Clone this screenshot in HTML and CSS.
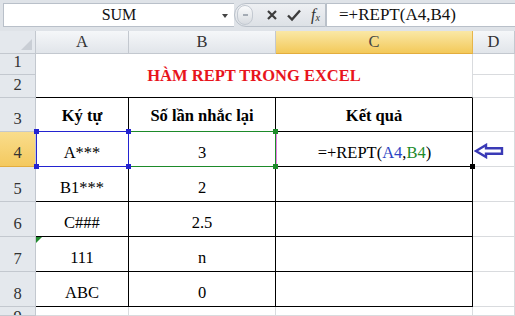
FILE: index.html
```html
<!DOCTYPE html>
<html>
<head>
<title>HÀM REPT TRONG EXCEL</title>
<link rel="stylesheet" href="styles.css">
</head>
<body>
	<div class="formula-bar">
		<div class="name-box">
			<span class="name">SUM</span>
			<span class="drop"></span>
		</div>
		<div class="fx-buttons">
			<span class="grip"><span></span></span>
			<svg class="btn" width="14" height="14" viewBox="0 0 14 14"><path d="M3 3 L11 11 M11 3 L3 11" stroke="#3c3c3c" stroke-width="2.2" fill="none"/></svg>
			<svg class="btn" width="16" height="14" viewBox="0 0 16 14"><path d="M2 7.5 L6 11.5 L14 2.5" stroke="#3c3c3c" stroke-width="2.4" fill="none"/></svg>
			<span class="fx">f<sub>x</sub></span>
		</div>
		<div class="formula">=+REPT(A4,B4)</div>
	</div>

	<div class="sheet">
		<!-- column headers -->
		<div class="corner"></div>
		<div class="ch">A</div>
		<div class="ch">B</div>
		<div class="ch sel">C</div>
		<div class="ch">D</div>

		<!-- rows 1-2 : title -->
		<div class="rh">1</div>
		<div class="cell title">HÀM REPT TRONG EXCEL</div>
		<div class="cell"></div>
		<div class="rh">2</div>
		<div class="cell"></div>

		<!-- row 3 : headers -->
		<div class="rh">3</div>
		<div class="cell t head">Ký tự</div>
		<div class="cell t head">Số lần nhắc lại</div>
		<div class="cell t head">Kết quả</div>
		<div class="cell"></div>

		<!-- row 4 -->
		<div class="rh sel">4</div>
		<div class="cell t">A***<span class="ref blue"><i class="h tl"></i><i class="h tr"></i><i class="h bl"></i><i class="h br"></i></span></div>
		<div class="cell t">3<span class="ref green"><i class="h tr"></i><i class="h br"></i></span></div>
		<div class="cell t active">=+REPT(<span class="c-blue">A4</span>,<span class="c-green">B4</span>)<i class="fill"></i></div>
		<div class="cell arrow-cell">
			<svg width="30" height="16" viewBox="0 0 30 16"><path d="M2 8 L12 2 L12 5.2 L28 5.2 L28 10.8 L12 10.8 L12 14 Z" fill="#ffffff" stroke="#3a3ab6" stroke-width="2.4" stroke-linejoin="miter"/></svg>
		</div>

		<div class="rh">5</div>
		<div class="cell t">B1***</div>
		<div class="cell t">2</div>
		<div class="cell t"></div>
		<div class="cell"></div>

		<div class="rh">6</div>
		<div class="cell t">C###</div>
		<div class="cell t">2.5</div>
		<div class="cell t"></div>
		<div class="cell"></div>

		<div class="rh">7</div>
		<div class="cell t err">111</div>
		<div class="cell t">n</div>
		<div class="cell t"></div>
		<div class="cell"></div>

		<div class="rh">8</div>
		<div class="cell t">ABC</div>
		<div class="cell t">0</div>
		<div class="cell t"></div>
		<div class="cell"></div>

		<div class="rh last">9</div>
		<div class="cell"></div>
		<div class="cell"></div>
		<div class="cell"></div>
		<div class="cell"></div>
	</div>
</body>
</html>
```

FILE: styles.css
```css
html, body {
  margin: 0;
  padding: 0;
  background: #ffffff;
  font-family: "Liberation Serif", "Times New Roman", serif;
}

body {
  width: 515px;
  height: 316px;
  overflow: hidden;
}

/* formula bar */
.formula-bar {
  display: flex;
  height: 31px;
  box-sizing: border-box;
  padding-top: 3px;
  background: #dfe3e8;
}

.name-box {
  position: relative;
  display: flex;
  align-items: center;
  justify-content: center;
  margin-left: 3px;
  width: 231px;
  height: 24px;
  box-sizing: border-box;
  background: #fff;
  border: 1px solid #b9c0c9;
  border-right: none;
  font-size: 16px;
  color: #111;
}

.drop {
  position: absolute;
  right: 6px;
  top: 10px;
  border-left: 3.5px solid transparent;
  border-right: 3.5px solid transparent;
  border-top: 4px solid #444;
}

.fx-buttons {
  display: flex;
  align-items: center;
  width: 92px;
  height: 24px;
  box-sizing: border-box;
  border: 1px solid #b9c0c9;
  border-radius: 12px 0 0 12px;
  background: linear-gradient(#eef0f3, #dde1e6);
}

.grip {
  display: flex;
  align-items: center;
  justify-content: center;
  width: 14px;
  height: 18px;
  margin-left: 2px;
  border-radius: 8px;
  background: linear-gradient(#fafbfc, #d7dbe0);
  border: 1px solid #c3c9d1;
}

.grip span {
  width: 5px;
  height: 2px;
  background: #a4abb4;
}

.btn {
  margin-left: 12px;
}

.btn + .btn {
  margin-left: 7px;
}

.fx {
  margin-left: 9px;
  font-style: italic;
  font-size: 16px;
  color: #333;
}

.fx sub {
  font-size: 10px;
  vertical-align: -1px;
}

.formula {
  flex: 1;
  height: 24px;
  box-sizing: border-box;
  padding-left: 12px;
  background: #fff;
  border: 1px solid #b9c0c9;
  border-right: none;
  font-size: 17px;
  line-height: 22px;
  color: #111;
}

/* sheet */
.sheet {
  display: grid;
  grid-template-columns: 36px 93px 147px 197px 42px;
  grid-template-rows: 23px 21px 23px 34px 35px 35px 35px 35px 35px 9px;
  font-size: 16.5px;
  color: #000;
}

.sheet > div {
  box-sizing: border-box;
  border-right: 1px solid #d9dbde;
  border-bottom: 1px solid #d9dbde;
}

.corner {
  position: relative;
  background: #e4e8ed;
  border-color: #c3c8cf !important;
}

.corner::after {
  content: "";
  position: absolute;
  right: 3px;
  bottom: 3px;
  border-left: 11px solid transparent;
  border-bottom: 11px solid #c9ced5;
}

.ch {
  display: flex;
  align-items: center;
  justify-content: center;
  background: linear-gradient(#f5f7f9, #e1e5ea);
  border-color: #c3c8cf !important;
  color: #333;
}

.ch.sel {
  background: linear-gradient(#fae8a6, #f3c95a);
  border-right-color: #e6b54a !important;
  border-bottom-color: #e3ad3e !important;
  color: #444;
}

.rh {
  display: flex;
  align-items: flex-end;
  justify-content: center;
  padding-bottom: 2px;
  background: #e4e8ed;
  border-color: #c3c8cf !important;
  color: #333;
}

.rh.sel {
  background: linear-gradient(#f9dd8c, #f4c95f);
  border-bottom-color: #e3ad3e !important;
  padding-bottom: 3px;
}

.rh.last {
  align-items: flex-start;
  padding: 1px 0 0;
  line-height: 18px;
  overflow: hidden;
}

.cell {
  position: relative;
  display: flex;
  align-items: flex-end;
  justify-content: center;
  padding-bottom: 3px;
}

.title {
  grid-column: 2 / 5;
  grid-row: span 2;
  align-items: center;
  padding-bottom: 0;
  padding-top: 1px;
  font-weight: bold;
  color: #e8141c;
  border-bottom-color: #000 !important;
}

.t {
  border-right-color: #000 !important;
  border-bottom-color: #000 !important;
}

.head {
  font-weight: bold;
  align-items: center;
  padding-bottom: 0;
  padding-top: 2px;
}

/* reference boxes around A4 and B4 */
.ref {
  position: absolute;
  top: -1px;
  left: 0;
  right: -1px;
  bottom: -1px;
  border: 1px solid;
}

.ref.blue {
  border-color: #2323d0;
  z-index: 2;
}

.ref.green {
  left: -1px;
  border-color: #1d8a2a;
  z-index: 1;
}

.h {
  position: absolute;
  width: 5px;
  height: 5px;
}

.blue .h { background: #2323d0; }
.green .h { background: #1d8a2a; }

.h.tl { left: -3px; top: -3px; }
.h.tr { right: -3px; top: -3px; }
.h.bl { left: -3px; bottom: -3px; }
.h.br { right: -3px; bottom: -3px; }

.active {
  border-left: 1px solid #e67ee6;
}

.c-blue { color: #2b44c4; }
.c-green { color: #1d8a2a; }

.fill {
  position: absolute;
  right: -3px;
  bottom: -3px;
  width: 5px;
  height: 5px;
  background: #000;
  z-index: 3;
}

.arrow-cell {
  justify-content: flex-start;
  padding-left: 1px;
  padding-bottom: 7px;
}

.err::before {
  content: "";
  position: absolute;
  left: 0;
  top: 0;
  border-top: 6px solid #1f8a2c;
  border-right: 6px solid transparent;
}
```
